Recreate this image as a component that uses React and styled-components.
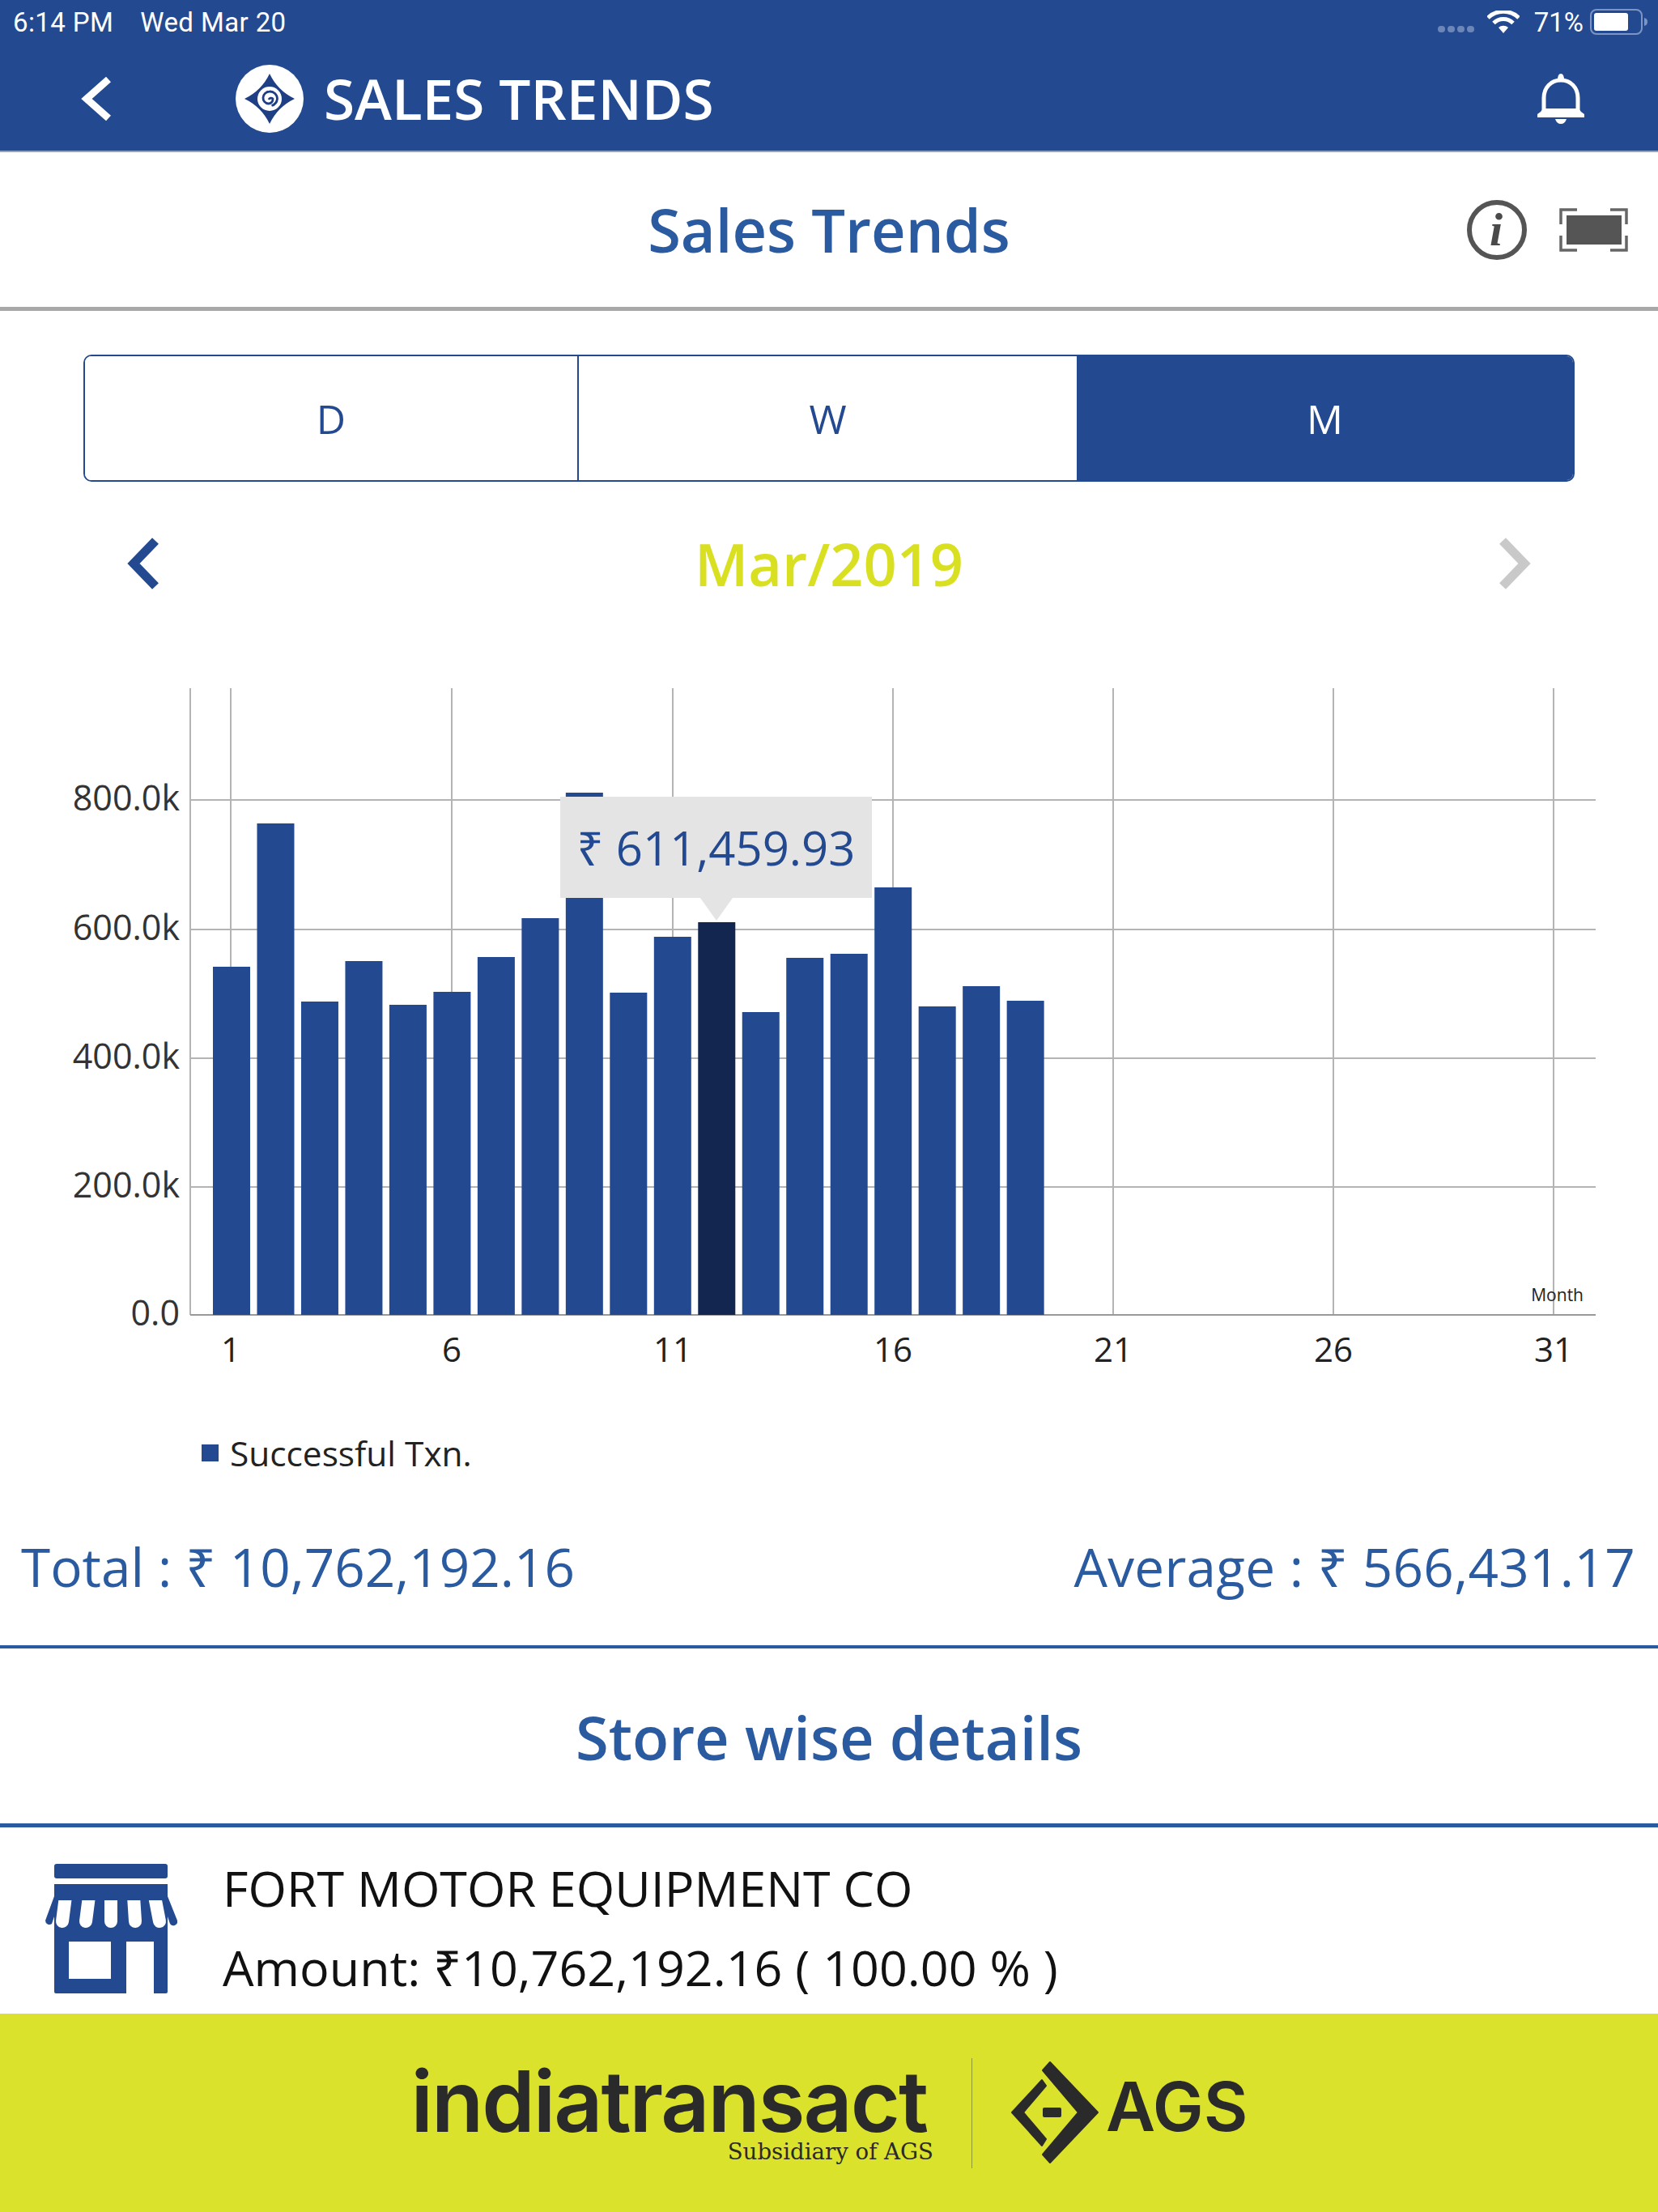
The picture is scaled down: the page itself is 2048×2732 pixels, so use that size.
import React from "react";
import styled, { createGlobalStyle } from "styled-components";

const BLUE = "#234a90";
const TEXT_BLUE = "#2a5a9f";
const LIME = "#dbe22b";

const GlobalStyle = createGlobalStyle`
  html, body { margin: 0; padding: 0; background: #fff; }
  body { font-family: "Open Sans", "Noto Sans", "DejaVu Sans", sans-serif; }
  * { box-sizing: border-box; }
`;

const Page = styled.div`
  width: 2048px;
  height: 2732px;
  overflow: hidden;
  display: flex;
  flex-direction: column;
  background: #fff;
`;

const Header = styled.header`
  height: 188px;
  background: ${BLUE};
  border-bottom: 2px solid #8ea3c8;
  color: #fff;
  display: flex;
  flex-direction: column;
`;

const StatusBar = styled.div`
  height: 54px;
  padding: 0 12px 0 16px;
  display: flex;
  align-items: center;
  justify-content: space-between;
  font-family: "Roboto", "Liberation Sans", sans-serif;
  font-size: 33px;
`;

const StatusLeft = styled.div`
  display: flex;
  gap: 33px;
  letter-spacing: 0.4px;
`;

const StatusRight = styled.div`
  display: flex;
  align-items: center;
  gap: 18px;
`;

const BatteryPct = styled.span`
  margin-right: -10px;
`;

const SignalDots = styled.div`
  display: flex;
  gap: 3px;
  margin-top: 18px;
  margin-right: -2px;
`;

const Dot = styled.span`
  width: 9px;
  height: 8px;
  border-radius: 4px;
  background: #6c86b8;
`;

const NavBar = styled.div`
  flex: 1;
  display: flex;
  align-items: center;
  padding: 3px 90px 0 100px;
`;

const BrandSlot = styled.div`
  margin-left: 151px;
  display: flex;
`;

const NavTitle = styled.h1`
  margin: 0 0 0 25px;
  font-size: 69.3px;
  font-weight: 600;
  line-height: 1;
  flex: 1;
`;

const TitleBar = styled.div`
  height: 196px;
  border-bottom: 5px solid #a8a8a8;
  display: grid;
  grid-template-columns: 1fr auto 1fr;
  align-items: center;
`;

const PageTitle = styled.h2`
  grid-column: 2;
  margin: 0;
  color: ${TEXT_BLUE};
  font-size: 74px;
  font-weight: 600;
  line-height: 1;
`;

const TitleActions = styled.div`
  grid-column: 3;
  justify-self: end;
  margin-right: 37px;
  display: flex;
  align-items: center;
  gap: 40px;
`;

const Tabs = styled.div`
  margin: 54px 103px 0;
  height: 157px;
  display: grid;
  grid-template-columns: 608px 617px 1fr;
  border: 2px solid ${BLUE};
  border-radius: 10px;
  overflow: hidden;
`;

const Tab = styled.div`
  display: flex;
  align-items: center;
  justify-content: center;
  font-size: 50px;
  color: ${(p) => (p.$active ? "#fff" : BLUE)};
  background: ${(p) => (p.$active ? BLUE : "#fff")};
  border-left: ${(p) => (p.$divider ? `2px solid ${BLUE}` : "none")};
`;

const DateRow = styled.div`
  height: 204px;
  padding: 0 157px 3px;
  display: flex;
  align-items: center;
  justify-content: space-between;
`;

const DateLabel = styled.div`
  color: #d9e022;
  font-size: 72px;
  font-weight: 600;
  line-height: 1;
`;

const ChartArea = styled.div`
  position: relative;
  height: 900px;
  margin-top: 31px;
`;

const ChartSvg = styled.svg`
  display: block;
  width: 2048px;
  height: 900px;
`;

const Tooltip = styled.div`
  position: absolute;
  left: 692px;
  top: 154px;
  width: 385px;
  height: 125px;
  display: flex;
  align-items: center;
  justify-content: center;
  background: #e4e4e4;
  color: ${BLUE};
  font-size: 58px;
  line-height: 1;

  &::after {
    content: "";
    position: absolute;
    left: 173px;
    top: 100%;
    border-left: 20px solid transparent;
    border-right: 20px solid transparent;
    border-top: 28px solid #e4e4e4;
  }
`;

const Legend = styled.div`
  margin-top: 37px;
  height: 54px;
  padding-left: 249px;
  display: flex;
  align-items: center;
  gap: 14px;
  font-size: 42.4px;
  color: #222;
`;

const LegendSwatch = styled.span`
  width: 21px;
  height: 21px;
  background: ${BLUE};
`;

const Totals = styled.div`
  height: 215px;
  padding: 16px 28px 0 26px;
  border-bottom: 4px solid ${TEXT_BLUE};
  display: flex;
  align-items: center;
  justify-content: space-between;
  color: ${TEXT_BLUE};
  font-size: 65.6px;
`;

const AverageValue = styled.span`
  letter-spacing: 0.3px;
`;

const StoreHead = styled.div`
  height: 221px;
  border-bottom: 5px solid ${TEXT_BLUE};
  display: flex;
  align-items: center;
  justify-content: center;
  padding-top: 3px;
  color: ${TEXT_BLUE};
  font-size: 74px;
  font-weight: 600;
`;

const StoreRow = styled.div`
  flex: 1;
  display: flex;
  align-items: center;
  padding: 20px 0 0 56px;
  gap: 56px;
`;

const StoreInfo = styled.div`
  display: flex;
  flex-direction: column;
  gap: 20px;
  margin-bottom: 3px;
  color: #111;
  font-size: 61px;
  line-height: 78px;
`;

const Footer = styled.footer`
  height: 245px;
  background: ${LIME};
  display: flex;
  align-items: center;
  padding-left: 505px;
`;

const Wordmark = styled.div`
  width: 647px;
  display: flex;
  flex-direction: column;
  align-items: flex-end;
  color: #2a2a2a;
`;

const WordmarkName = styled.div`
  margin: 8px 7px 0 0;
  font-family: "Inter", "Lato", sans-serif;
  font-size: 105px;
  font-weight: 600;
  line-height: 82px;
  letter-spacing: -2px;
  white-space: nowrap;
`;

const WordmarkSub = styled.div`
  font-family: "DejaVu Serif", "Liberation Serif", serif;
  font-size: 27.6px;
  line-height: 30px;
  margin-top: 7px;
  margin-right: -1px;
`;

const FooterRule = styled.div`
  width: 1px;
  height: 136px;
  margin: 0 47px 0 48px;
  background: #8f9a2c;
`;

const AgsText = styled.div`
  margin: 0 0 16px 8px;
  font-family: "Inter", "Lato", sans-serif;
  font-size: 84px;
  font-weight: 600;
  line-height: 1;
  color: #2a2a2a;
`;

const BackIcon = () => (
  <svg width="40" height="56" viewBox="0 0 40 56">
    <polyline points="34,4 7,28 34,52" fill="none" stroke="#fff" strokeWidth="9" />
  </svg>
);

const BrandIcon = () => (
  <svg width="84" height="84" viewBox="-42 -42 84 84">
    <circle r="42" fill="#fff" />
    <path d="M0-31Q10-10 31 0Q10 10 0 31Q-10 10-31 0Q-10-10 0-31Z" fill="#1f3f85" />
    <circle r="15" fill="#fff" />
    <path d="M-1 1a3 3 0 0 1 5-1a5.5 5.5 0 0 1-5.5 6a7 7 0 0 1-6.5-7.5a8 8 0 0 1 8-7.5a9 9 0 0 1 9.5 9a10 10 0 0 1-7 8.5" fill="none" stroke="#1f3f85" strokeWidth="2.8" />
  </svg>
);

const BellIcon = () => (
  <svg width="60" height="62" viewBox="0 0 60 62">
    <path d="M30 0Q34 0 34 8H26Q26 0 30 0Z" fill="#fff" />
    <path d="M9 46V30C9 17 18 8 30 8s21 9 21 22v16" fill="none" stroke="#fff" strokeWidth="5" />
    <path d="M1 50Q6 47 8 43H52Q54 47 59 50V54H1Z" fill="#fff" />
    <path d="M23 56H37Q35 62 30 62T23 56Z" fill="#fff" />
  </svg>
);

const WifiIcon = () => (
  <svg width="40" height="28" viewBox="0 0 40 28">
    <path d="M1 9a27 27 0 0 1 38 0" fill="none" stroke="#fff" strokeWidth="5" />
    <path d="M8 15.5a17 17 0 0 1 24 0" fill="none" stroke="#fff" strokeWidth="5" />
    <path d="M14 21a9 9 0 0 1 12 0L20 28Z" fill="#fff" />
  </svg>
);

const BatteryIcon = () => (
  <svg width="72" height="32" viewBox="0 0 72 32">
    <rect x="1" y="1" width="63" height="30" rx="7" fill="none" stroke="#7d95c2" strokeWidth="2" />
    <rect x="5" y="5" width="42" height="22" rx="3" fill="#fff" />
    <path d="M67 11q4 1 4 5t-4 5Z" fill="#7d95c2" />
  </svg>
);

const InfoIcon = () => (
  <svg width="74" height="74" viewBox="0 0 74 74">
    <circle cx="37" cy="37" r="34" fill="none" stroke="#555" strokeWidth="6" />
    <text x="36" y="56" textAnchor="middle" fontFamily="'Liberation Serif', serif" fontStyle="italic" fontWeight="700" fontSize="58" fill="#4a4a4a">i</text>
  </svg>
);

const ExpandIcon = () => (
  <svg width="85" height="54" viewBox="0 0 85 54">
    <path d="M22 2H2V20M63 2H83V20M22 52H2V34M63 52H83V34" fill="none" stroke="#666" strokeWidth="3.5" />
    <rect x="9" y="9" width="68" height="36" fill="#555" />
  </svg>
);

const PrevIcon = () => (
  <svg width="40" height="64" viewBox="0 0 40 64">
    <polyline points="35,4 8,32 35,60" fill="none" stroke={BLUE} strokeWidth="11" />
  </svg>
);

const NextIcon = () => (
  <svg width="40" height="64" viewBox="0 0 40 64">
    <polyline points="5,4 32,32 5,60" fill="none" stroke="#c9c9c9" strokeWidth="11" />
  </svg>
);

const StoreIcon = () => (
  <svg width="163" height="160" viewBox="0 0 163 160">
    <rect x="11" y="0" width="140" height="18" rx="3" fill={BLUE} />
    <path d="M11 75V158a2 2 0 0 0 2 2H100V96H134V160H149a2 2 0 0 0 2-2V75ZM29 96H81V142H29Z" fill={BLUE} fillRule="evenodd" />
    <path d="M14 25H148a3 3 0 0 1 3 3V40L163 70a5 5 0 0 1-9 4L150 62H12L8 74a5 5 0 0 1-8-4L11 40V28a3 3 0 0 1 3-3Z" fill={BLUE} />
    <path d="M11 50H151V75H11Z" fill={BLUE} />
    <g stroke="#fff" strokeWidth="16" strokeLinecap="round">
      <path d="M25 40L21 71M54 40L50 71M81 40V71M109 40L111 71M135 40L141 71" />
    </g>
    <rect x="11" y="25" width="140" height="20" fill={BLUE} />
  </svg>
);

const AgsMark = () => (
  <svg width="110" height="130" viewBox="0 0 110 130" fill="#2a2a2a" stroke="#2a2a2a" strokeWidth="2" strokeLinejoin="round">
    <path d="M49 2L108 64L49 126L40 116L84 64L40 12Z" />
    <path d="M39 24L2 64L39 105L44 97L16 64L44 31Z" />
    <rect x="41" y="59" width="21" height="10" rx="1" />
  </svg>
);

const CHART_TOP = 830;
const barTops = [1194, 1017, 1237, 1187, 1241, 1225, 1182, 1134, 979, 1226, 1157, 1139, 1250, 1183, 1178, 1096, 1243, 1218, 1236];
const axisBottom = 1624;
const yTicks = [
  { label: "800.0k", y: 988 },
  { label: "600.0k", y: 1148 },
  { label: "400.0k", y: 1307 },
  { label: "200.0k", y: 1466 },
];
const xTicks = [
  { label: "1", x: 285 },
  { label: "6", x: 558 },
  { label: "11", x: 831 },
  { label: "16", x: 1103 },
  { label: "21", x: 1375 },
  { label: "26", x: 1647 },
  { label: "31", x: 1919 },
];

const SalesChart = () => (
  <ChartSvg viewBox={`0 ${CHART_TOP} 2048 900`}>
    <g stroke="#b4b4b4" strokeWidth="2">
      <line x1="235" y1="850" x2="235" y2={axisBottom} />
      {xTicks.map((t) => (
        <line key={t.x} x1={t.x} y1="850" x2={t.x} y2={axisBottom} />
      ))}
      {yTicks.map((t) => (
        <line key={t.y} x1="235" y1={t.y} x2="1971" y2={t.y} />
      ))}
      <line x1="235" y1={axisBottom} x2="1971" y2={axisBottom} stroke="#999" />
    </g>
    {barTops.map((top, i) => (
      <rect
        key={i}
        x={263 + i * 54.48}
        y={top}
        width="46"
        height={axisBottom - top}
        fill={i === 11 ? "#13264f" : BLUE}
      />
    ))}
    <g fontFamily="'Open Sans', sans-serif" fontSize="43" fill="#333" textAnchor="end">
      {yTicks.map((t) => (
        <text key={t.label} x="222" y={t.y + 13}>{t.label}</text>
      ))}
      <text x="222" y="1637">0.0</text>
    </g>
    <g fontFamily="'Open Sans', sans-serif" fontSize="42" fill="#222" textAnchor="middle">
      {xTicks.map((t) => (
        <text key={t.label} x={t.x} y="1682">{t.label}</text>
      ))}
    </g>
    <text x="1956" y="1607" textAnchor="end" fontFamily="'Open Sans', sans-serif" fontSize="21" fill="#222">Month</text>
  </ChartSvg>
);

export default function App() {
  return (
    <Page>
      <GlobalStyle />
      <Header>
        <StatusBar>
          <StatusLeft>
            <span>6:14 PM</span>
            <span>Wed Mar 20</span>
          </StatusLeft>
          <StatusRight>
            <SignalDots>
              <Dot /><Dot /><Dot /><Dot />
            </SignalDots>
            <WifiIcon />
            <BatteryPct>71%</BatteryPct>
            <BatteryIcon />
          </StatusRight>
        </StatusBar>
        <NavBar>
          <BackIcon />
          <BrandSlot>
            <BrandIcon />
          </BrandSlot>
          <NavTitle>SALES TRENDS</NavTitle>
          <BellIcon />
        </NavBar>
      </Header>
      <TitleBar>
        <PageTitle>Sales Trends</PageTitle>
        <TitleActions>
          <InfoIcon />
          <ExpandIcon />
        </TitleActions>
      </TitleBar>
      <Tabs>
        <Tab>D</Tab>
        <Tab $divider>W</Tab>
        <Tab $active>M</Tab>
      </Tabs>
      <DateRow>
        <PrevIcon />
        <DateLabel>Mar/2019</DateLabel>
        <NextIcon />
      </DateRow>
      <ChartArea>
        <SalesChart />
        <Tooltip>₹ 611,459.93</Tooltip>
      </ChartArea>
      <Legend>
        <LegendSwatch />
        Successful Txn.
      </Legend>
      <Totals>
        <span>Total : ₹ 10,762,192.16</span>
        <AverageValue>Average : ₹ 566,431.17</AverageValue>
      </Totals>
      <StoreHead>Store wise details</StoreHead>
      <StoreRow>
        <StoreIcon />
        <StoreInfo>
          <div>FORT MOTOR EQUIPMENT CO</div>
          <div>Amount: ₹10,762,192.16 ( 100.00 % )</div>
        </StoreInfo>
      </StoreRow>
      <Footer>
        <Wordmark>
          <WordmarkName>indiatransact</WordmarkName>
          <WordmarkSub>Subsidiary of AGS</WordmarkSub>
        </Wordmark>
        <FooterRule />
        <AgsMark />
        <AgsText>AGS</AgsText>
      </Footer>
    </Page>
  );
}
